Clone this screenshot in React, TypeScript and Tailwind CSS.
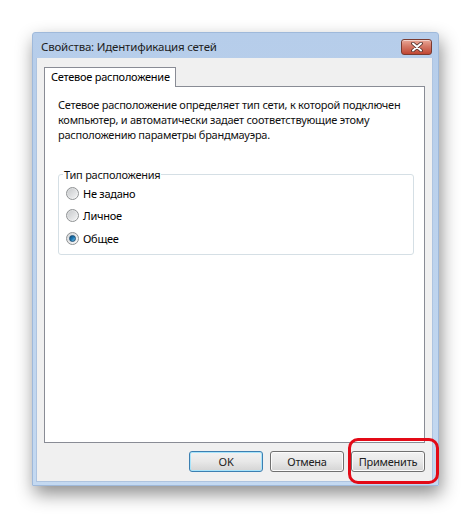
const radios = [
  { label: "Не задано", checked: false },
  { label: "Личное", checked: false },
  { label: "Общее", checked: true },
];

const buttons = [
  { title: "OK", primary: true },
  { title: "Отмена", primary: false },
  { title: "Применить", primary: false },
];

function CloseButton() {
  return (
    <div className="mt-[6px] w-[31px] h-[16px] rounded-[3px] border border-[#7a3b30] bg-gradient-to-b from-[#e9a797] via-[#d27462] to-[#c04532] flex items-center justify-center shadow-[inset_0_1px_0_rgba(255,255,255,0.5)]">
      <svg width="12" height="10" viewBox="0 0 12 10">
        <path d="M2 1.5 L10 8.5 M10 1.5 L2 8.5" stroke="#4a2a26" strokeWidth="3.6" strokeLinecap="round" />
        <path d="M2 1.5 L10 8.5 M10 1.5 L2 8.5" stroke="#ffffff" strokeWidth="2" strokeLinecap="round" />
      </svg>
    </div>
  );
}

function Radio({ checked }: { checked: boolean }) {
  return (
    <div className="w-[13px] h-[13px] rounded-full border border-[#8f9294] bg-gradient-to-br from-[#d4d6d8] to-[#fbfbfb] flex items-center justify-center shrink-0">
      {checked ? (
        <div className="w-[7px] h-[7px] rounded-full bg-gradient-to-br from-[#0d4c7a] via-[#1f79b6] to-[#6cc6ec] border border-[#1a4f78]" />
      ) : (
        <div className="w-[9px] h-[9px] rounded-full bg-gradient-to-br from-[#c9cbcd] to-[#f1f2f3]" />
      )}
    </div>
  );
}

export default function App() {
  return (
    <div className="relative w-[471px] h-[518px] bg-white pt-[32px] pl-[32px] font-['Noto_Sans',sans-serif] text-[11px] tracking-[-0.25px] text-black">
      <div className="w-[407px] h-[454px] flex flex-col bg-gradient-to-b from-[#b6cdea] to-[#c4d9f1] border border-[#9fb9da] rounded-t-[3px] shadow-[2px_8px_18px_rgba(0,0,0,0.45)]">
        <div className="h-[25px] flex items-start justify-between pl-[8px] pr-[6px]">
          <div className="mt-[6px] text-[11.5px] tracking-[-0.2px] leading-[16px] text-[#1e1e1e] whitespace-nowrap">
            Свойства: Идентификация сетей
          </div>
          <CloseButton />
        </div>

        <div className="ml-[3px] mr-[5px] h-[424px] bg-[#f0f0f0] flex flex-col pt-[9px] px-[7px] pb-[9px] border border-[#aec4e0] border-t-0">
          <div className="flex">
            <div className="relative z-10 -mb-px h-[20px] pl-[6px] pr-[5px] bg-white border border-b-0 border-[#898c95] leading-[18px] whitespace-nowrap">
              Сетевое расположение
            </div>
          </div>
          <div className="h-[358px] bg-white border border-[#898c95] pt-[10px] pl-[13px]">
            <p className="leading-[15px] text-[#111] whitespace-nowrap">
              Сетевое расположение определяет тип сети, к которой подключен
              <br />
              компьютер, и автоматически задает соответствующие этому
              <br />
              расположению параметры брандмауэра.
            </p>

            <fieldset className="mt-[25px] w-[356px] border border-[#d5dfe5] rounded-[3px] pb-[4px]">
              <legend className="ml-[4px] px-[1px] leading-[15px] text-[#111]">
                Тип расположения
              </legend>
              <div className="flex flex-col pl-[7px]">
                {radios.map((r) => (
                  <div key={r.label} className="h-[22.5px] flex items-center gap-[4px]">
                    <Radio checked={r.checked} />
                    <span className="leading-[15px]">{r.label}</span>
                  </div>
                ))}
              </div>
            </fieldset>
          </div>

          <div className="mt-[8px] flex justify-end gap-[7px]">
            {buttons.map((b) => (
              <div
                key={b.title}
                className={`w-[74px] h-[21px] rounded-[3px] flex items-center justify-center leading-none text-[#222] bg-gradient-to-b from-[#f2f2f2] via-[#e8e8e8] to-[#d4d4d4] ${
                  b.primary
                    ? "border border-[#3c7fb1] shadow-[inset_0_0_0_1px_#a8e4fb]"
                    : "border border-[#707070] shadow-[inset_0_0_0_1px_#fbfbfb]"
                }`}
              >
                {b.title}
              </div>
            ))}
          </div>
        </div>
      </div>

      <div className="absolute left-[348px] top-[438px] w-[91px] h-[46px] rounded-[10px] border-[3.5px] border-[#e30a17]" />
    </div>
  );
}
